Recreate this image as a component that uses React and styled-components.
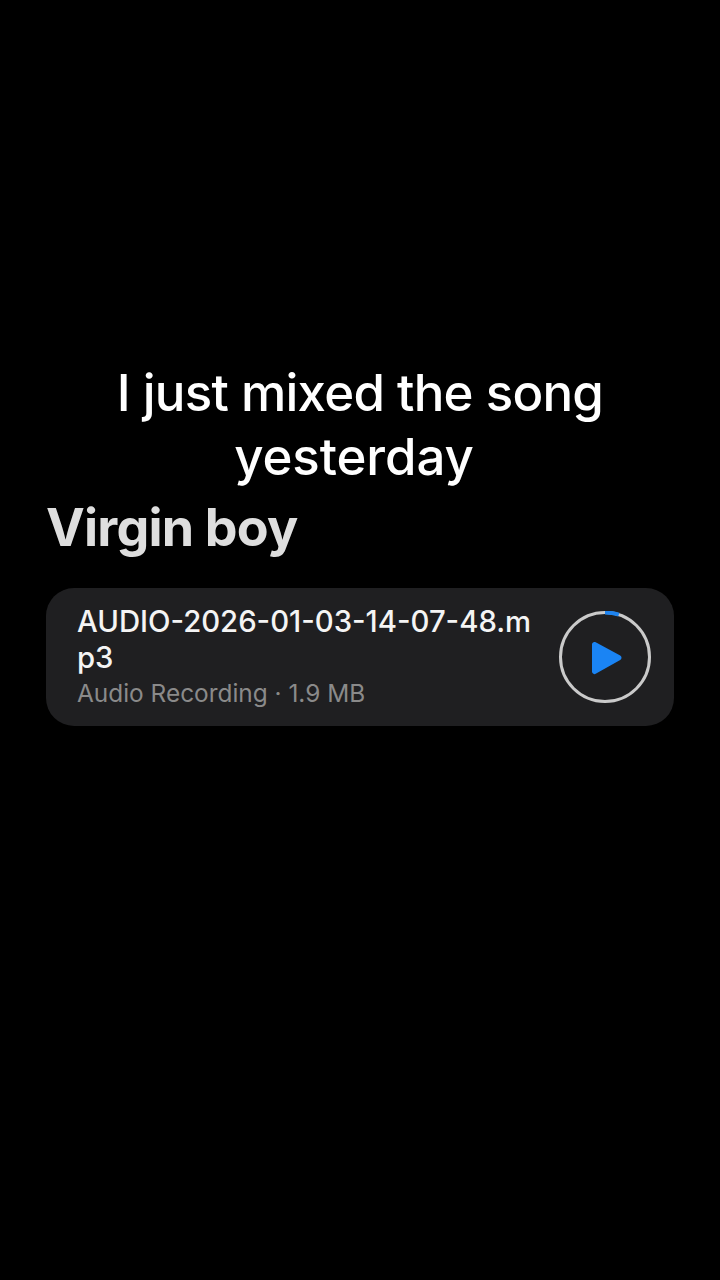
import React from 'react';
import styled, { createGlobalStyle } from 'styled-components';

const GlobalStyle = createGlobalStyle`
	html, body {
		margin: 0;
		padding: 0;
		background: #000;
	}
`;

const Page = styled.div`
	width: 720px;
	height: 1280px;
	box-sizing: border-box;
	padding-top: 361px;
	background: #000;
	font-family: 'Inter', 'Liberation Sans', sans-serif;
	overflow: hidden;
`;

const Caption = styled.h1`
	margin: 0 auto;
	width: 540px;
	color: #fff;
	font-size: 51px;
	font-weight: 500;
	line-height: 64px;
	letter-spacing: -0.75px;
	text-align: center;
`;

// the second line sits a little left of centre in the video caption
const CaptionLine = styled.span`
	display: block;
	padding-right: ${(props) => props.$shift || 0}px;
	letter-spacing: ${(props) => (props.$shift ? '-0.1px' : 'inherit')};
`;

const Sender = styled.h2`
	margin: 7px 0 0 46px;
	color: #dedede;
	font-size: 52px;
	font-weight: 700;
	line-height: 64px;
	letter-spacing: -0.8px;
`;

const Card = styled.div`
	margin: 28px 46px 0;
	height: 138px;
	box-sizing: border-box;
	padding: 16px 23px 0 31px;
	display: flex;
	justify-content: space-between;
	background: #1f1f21;
	border-radius: 28px;
`;

const Info = styled.div`
	width: 456px;
`;

const FileName = styled.div`
	color: #f4f4f4;
	font-size: 29.3px;
	font-weight: 500;
	line-height: 36px;
	word-break: break-all;
`;

const Meta = styled.div`
	margin-top: -1px;
	color: #8a8a8a;
	font-size: 24.4px;
	line-height: 36px;
`;

const PlayIcon = styled.svg`
	flex: none;
	width: 92px;
	height: 92px;
	margin-top: 7px;
`;

const App = () => (
	<>
		<GlobalStyle />
		<Page>
			<Caption>
				<CaptionLine>I just mixed the song</CaptionLine>
				<CaptionLine $shift={12}>yesterday</CaptionLine>
			</Caption>
			<Sender>Virgin boy</Sender>
			<Card>
				<Info>
					<FileName>AUDIO-2026-01-03-14-07-48.mp3</FileName>
					<Meta>Audio Recording · 1.9 MB</Meta>
				</Info>
				<PlayIcon viewBox="0 0 92 92">
					<circle cx="46" cy="46" r="44.5" fill="none" stroke="#cacaca" strokeWidth="3" />
					<path d="M46 1.500a44.500 44.500 0 0 1 13.800 2.200" fill="none" stroke="#1e84f0" strokeWidth="4" />
					<path
						d="M33 33.500c0-2 2-3.200 3.700-2.200l24.500 13.300c1.800 1 1.800 3.500 0 4.500l-24.500 13.700c-1.700 1-3.700-.2-3.700-2.200z"
						fill="#1a84f4"
					/>
				</PlayIcon>
			</Card>
		</Page>
	</>
);

export default App;
